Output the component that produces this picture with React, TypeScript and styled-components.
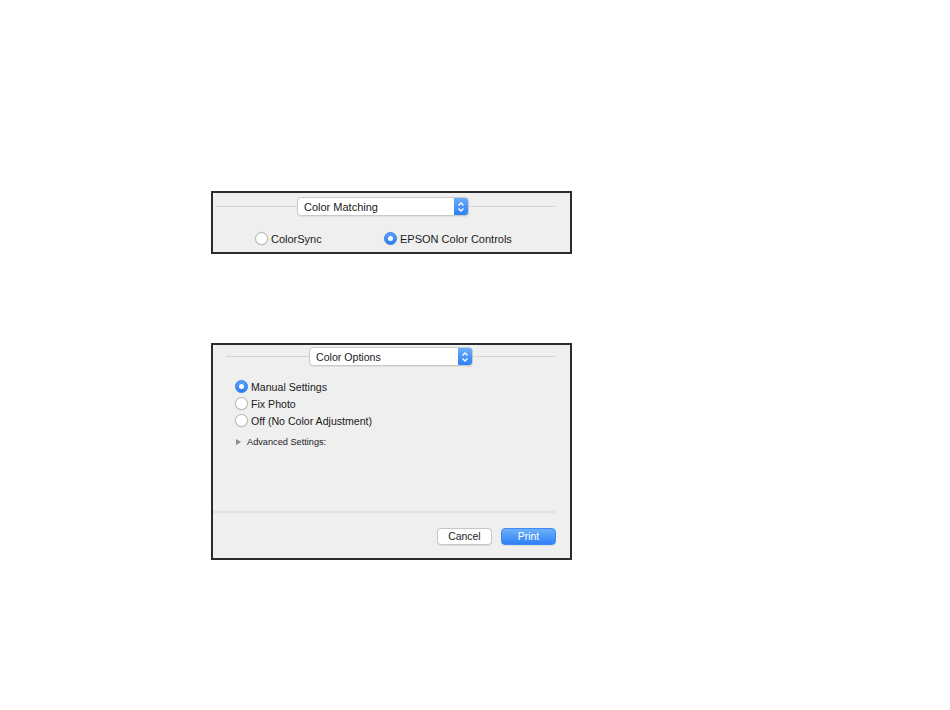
import React, { FC } from "react";
import styled, { createGlobalStyle } from "styled-components";

const GlobalStyle = createGlobalStyle`
  body {
    margin: 0;
    background: #ffffff;
    font-family: "Liberation Sans", Arial, sans-serif;
    color: #1a1a1a;
  }
`;

const Page = styled.div`
  display: flex;
  flex-direction: column;
  gap: 89px;
  padding: 191px 0 0 211px;
`;

const Panel = styled.div<{ $height: number }>`
  box-sizing: border-box;
  width: 361px;
  height: ${(p) => p.$height}px;
  border: 2px solid #2c2c2c;
  background: #efefef;
  display: flex;
  flex-direction: column;
`;

const Header = styled.div<{ $top: number; $left: number; $lead: number }>`
  display: flex;
  align-items: center;
  margin-top: ${(p) => p.$top}px;
  padding: 0 15px 0 ${(p) => p.$left}px;

  & > span:first-child {
    width: ${(p) => p.$lead}px;
    flex: none;
  }
`;

const Rule = styled.span`
  flex: 1;
  height: 1px;
  background: #d4d4d4;
`;

const PopupBox = styled.div<{ $width: number; $size: number }>`
  box-sizing: border-box;
  width: ${(p) => p.$width}px;
  height: 19px;
  display: flex;
  align-items: stretch;
  background: #ffffff;
  border: 1px solid #c9c9c9;
  border-radius: 4px;
  box-shadow: 0 1px 0 rgba(0, 0, 0, 0.06);
  font-size: ${(p) => p.$size}px;
  overflow: hidden;
`;

const PopupLabel = styled.span`
  flex: 1;
  display: flex;
  align-items: center;
  padding-left: 6px;
  color: #1a1a1a;
`;

const Stepper = styled.span`
  width: 14px;
  display: flex;
  align-items: center;
  justify-content: center;
  background: linear-gradient(#6aaefb, #2f7ff4);
`;

const Popup: FC<{ label: string; width: number; size: number }> = ({
  label,
  width,
  size,
}) => (
  <PopupBox $width={width} $size={size}>
    <PopupLabel>{label}</PopupLabel>
    <Stepper>
      <svg width="8" height="12" viewBox="0 0 8 12">
        <polyline
          points="1.5,4.5 4,2 6.5,4.5"
          fill="none"
          stroke="#fff"
          strokeWidth="1.3"
        />
        <polyline
          points="1.5,7.5 4,10 6.5,7.5"
          fill="none"
          stroke="#fff"
          strokeWidth="1.3"
        />
      </svg>
    </Stepper>
  </PopupBox>
);

const Circle = styled.span<{ $on: boolean }>`
  box-sizing: border-box;
  width: 13px;
  height: 13px;
  border-radius: 50%;
  flex: none;
  display: flex;
  align-items: center;
  justify-content: center;
  background: ${(p) =>
    p.$on ? "linear-gradient(#5aa3fa, #2d7ef4)" : "#ffffff"};
  border: 1px solid ${(p) => (p.$on ? "#2f7ff0" : "#b3b3b3")};
  box-shadow: 0 0.5px 1px rgba(0, 0, 0, 0.12);

  &::after {
    content: "";
    display: ${(p) => (p.$on ? "block" : "none")};
    width: 5px;
    height: 5px;
    border-radius: 50%;
    background: #ffffff;
  }
`;

const Option = styled.label<{ $size: number }>`
  display: flex;
  align-items: center;
  gap: 3px;
  height: 17px;
  font-size: ${(p) => p.$size}px;
  color: #1a1a1a;
`;

const Radio: FC<{ label: string; on?: boolean; size: number }> = ({
  label,
  on = false,
  size,
}) => (
  <Option $size={size}>
    <Circle $on={on} />
    {label}
  </Option>
);

const SourceRow = styled.div`
  display: grid;
  grid-template-columns: 129px auto;
  margin-top: 14px;
  padding-left: 42px;
`;

const RadioList = styled.div`
  display: flex;
  flex-direction: column;
  margin-top: 12px;
  padding-left: 22px;
`;

const Disclosure = styled.div`
  display: flex;
  align-items: center;
  gap: 6px;
  height: 12px;
  margin-top: 7px;
  padding-left: 23px;
  font-size: 9.2px;
  color: #1a1a1a;
`;

const Triangle = styled.span`
  width: 0;
  height: 0;
  border-top: 3.5px solid transparent;
  border-bottom: 3.5px solid transparent;
  border-left: 5px solid #8a8a8a;
`;

const Footer = styled.div`
  margin-top: auto;
  padding-bottom: 13px;
`;

const Separator = styled.div`
  height: 2px;
  margin-right: 15px;
  background: #e0e0e0;
`;

const Buttons = styled.div`
  display: flex;
  justify-content: flex-end;
  gap: 9px;
  margin-top: 15px;
  padding-right: 14px;
`;

const Button = styled.button<{ $primary?: boolean }>`
  box-sizing: border-box;
  width: 55px;
  height: 17px;
  padding: 0;
  border-radius: 4px;
  font-family: inherit;
  font-size: 10.4px;
  border: 1px solid ${(p) => (p.$primary ? "#3d8bf6" : "#c6c6c6")};
  background: ${(p) =>
    p.$primary ? "linear-gradient(#6db1fb, #2f80f5)" : "#ffffff"};
  color: ${(p) => (p.$primary ? "#ffffff" : "#1a1a1a")};
  box-shadow: 0 1px 0 rgba(0, 0, 0, 0.08);
`;

export default function App() {
  return (
    <>
      <GlobalStyle />
      <Page>
        <Panel $height={63}>
          <Header $top={4} $left={2} $lead={82}>
            <Rule />
            <Popup label="Color Matching" width={172} size={11} />
            <Rule />
          </Header>
          <SourceRow>
            <Radio label="ColorSync" size={11} />
            <Radio label="EPSON Color Controls" on size={11} />
          </SourceRow>
        </Panel>

        <Panel $height={217}>
          <Header $top={2} $left={13} $lead={83}>
            <Rule />
            <Popup label="Color Options" width={164} size={10.6} />
            <Rule />
          </Header>
          <RadioList>
            <Radio label="Manual Settings" on size={10.6} />
            <Radio label="Fix Photo" size={10.6} />
            <Radio label="Off (No Color Adjustment)" size={10.6} />
          </RadioList>
          <Disclosure>
            <Triangle />
            Advanced Settings:
          </Disclosure>
          <Footer>
            <Separator />
            <Buttons>
              <Button>Cancel</Button>
              <Button $primary>Print</Button>
            </Buttons>
          </Footer>
        </Panel>
      </Page>
    </>
  );
}
